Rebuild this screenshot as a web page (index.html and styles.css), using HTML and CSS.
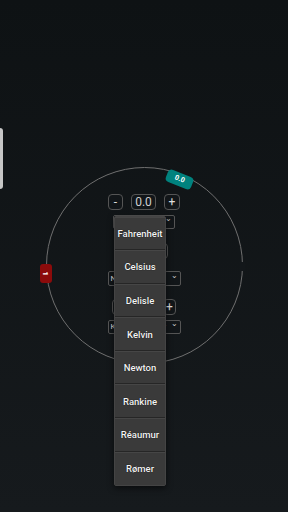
FILE: index.html
```html
<!DOCTYPE html>
<html lang="de">
<head>
  <meta charset="UTF-8">
  <title>Temperatur</title>
  <link rel="stylesheet" href="styles.css">
</head>
<body>

  <!-- Drawer-Griff links -->
  <div class="side-tab"></div>

  <main class="screen">
    <!-- Drehregler -->
    <div class="dial">
      <span class="dial-gap"></span>
      <span class="badge badge-teal">0.0</span>
      <span class="badge badge-red"><span>1</span></span>

      <!-- Eingabe -->
      <div class="step-row">
        <button class="btn-step">-</button>
        <div class="value-box">0.0</div>
        <button class="btn-step">+</button>
      </div>

      <div class="select select-top">
        <span class="select-text"></span>
        <span class="chev">&#8964;</span>

        <!-- offene Auswahl -->
        <ul class="menu">
          <li>Fahrenheit</li>
          <li>Celsius</li>
          <li>Delisle</li>
          <li>Kelvin</li>
          <li>Newton</li>
          <li>Rankine</li>
          <li>Réaumur</li>
          <li>Rømer</li>
        </ul>
      </div>

      <!-- verdeckt von der Auswahl -->
      <div class="value-box wide"></div>

      <div class="select select-wide">
        <span class="select-text">Normalwert (1)</span>
        <span class="chev">&#8964;</span>
      </div>

      <div class="step-row small">
        <button class="btn-step"></button>
        <div class="value-box"></div>
        <button class="btn-step">+</button>
      </div>

      <div class="select select-wide last">
        <span class="select-text">Kelvin Réaumur</span>
        <span class="chev">&#8964;</span>
      </div>
    </div>
  </main>

</body>
</html>
```

FILE: styles.css
```css
body {
  margin: 0;
  padding: 0;
  width: 288px;
  height: 512px;
  overflow: hidden;
  font-family: Roboto, "Liberation Sans", sans-serif;
  background: linear-gradient(#0e1214, #161a1d);
  color: #ddd;
}
.side-tab {
  position: fixed;
  left: 0;
  top: 128px;
  width: 3px;
  height: 61px;
  background: #c6c6c6;
  border-radius: 0 3px 3px 0;
}
.screen {
  padding-top: 167px;
}

/* Drehregler */
.dial {
  position: relative;
  width: 197px;
  height: 197px;
  margin: 0 auto;
  box-sizing: border-box;
  border: 1.5px solid #6f6f6f;
  border-radius: 50%;
  display: flex;
  flex-direction: column;
  align-items: center;
  padding-top: 25.5px;
}
.dial-gap {
  position: absolute;
  right: -3px;
  top: 94px;
  width: 5px;
  height: 9px;
  background: #13171a;
}
.badge {
  position: absolute;
  color: #fff;
  font-weight: bold;
  text-align: center;
}
.badge-teal {
  left: 119px;
  top: 5px;
  width: 27px;
  height: 13px;
  line-height: 13px;
  font-size: 7px;
  background: #00827e;
  border-radius: 4px;
  transform: rotate(22deg);
}
.badge-red {
  left: -7px;
  top: 96px;
  width: 12px;
  height: 19px;
  background: #8c0b0b;
  border-radius: 3px;
  display: flex;
  align-items: center;
  justify-content: center;
  font-size: 8px;
}
.badge-red span {
  display: block;
  transform: rotate(90deg);
}

/* Eingaben */
.step-row {
  display: flex;
  gap: 8px;
  height: 16px;
}
.btn-step,
.value-box {
  box-sizing: border-box;
  height: 16px;
  background: #121619;
  border: 1px solid #555;
  border-radius: 4px;
  color: #ddd;
  font-family: Roboto, "Liberation Sans", sans-serif;
  display: flex;
  align-items: center;
  justify-content: center;
  padding: 0;
}
.btn-step {
  width: 15px;
  font-size: 12px;
}
.step-row .btn-step:last-child {
  width: 16px;
}
.value-box {
  width: 25px;
  font-size: 12px;
  color: #cfcfcf;
}
.value-box.wide {
  width: 48px;
  margin-top: 14px;
}
.step-row.small {
  gap: 6px;
  margin-top: 13px;
}
.step-row.small .btn-step {
  width: 13px;
}
.step-row.small .value-box {
  width: 26px;
}

.select {
  position: relative;
  box-sizing: border-box;
  height: 14px;
  border: 1px solid #555;
  border-radius: 2px;
  background: #121619;
  display: flex;
  align-items: center;
  justify-content: space-between;
  padding: 0 2px 0 2px;
  font-size: 8px;
  color: #ddd;
}
.select-top {
  width: 62px;
  margin-top: 5px;
}
.select-wide {
  width: 73px;
  height: 15px;
  margin-top: 12px;
}
.select-wide.last {
  height: 14px;
  margin-top: 5px;
}
.chev {
  font-size: 8px;
  line-height: 8px;
  margin-top: -5px;
  color: #ccc;
}

/* offene Auswahl */
.menu {
  position: absolute;
  left: 0;
  top: 0;
  width: 50px;
  margin: 0;
  padding: 0;
  list-style: none;
  background: #2a2a2a;
  border: 1px solid #444;
  border-radius: 2px;
  box-shadow: 0 2px 6px rgba(0, 0, 0, 0.6);
  z-index: 5;
}
.menu li {
  box-sizing: border-box;
  height: 33.6px;
  display: flex;
  align-items: center;
  justify-content: center;
  background: #3a3a3a;
  border-bottom: 1px solid #262626;
  border-top: 1px solid #464646;
  font-size: 9.5px;
  font-weight: 500;
  color: #f4f4f4;
  text-shadow: 0 0 1px #000;
}
.menu li:last-child {
  border-bottom: none;
}
```
